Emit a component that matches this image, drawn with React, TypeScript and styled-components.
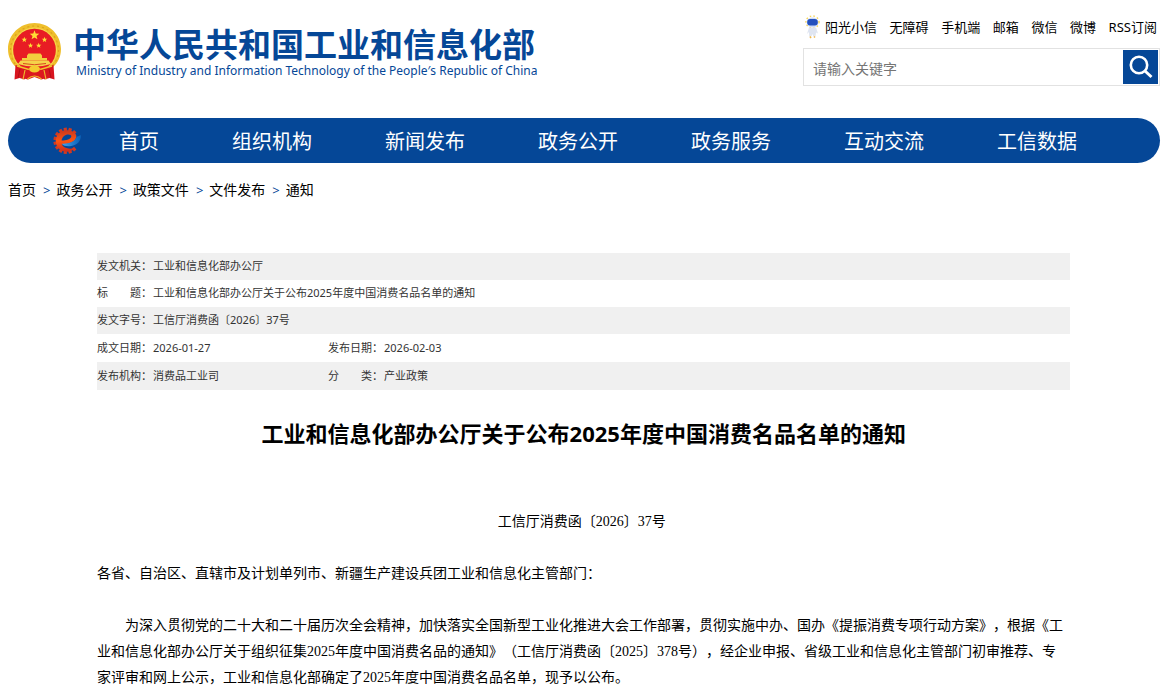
import React from "react";
import styled, { createGlobalStyle } from "styled-components";

const BLUE = "#054797";
const SANS = `"Noto Sans", "Noto Sans CJK SC", sans-serif`;

const GlobalStyle = createGlobalStyle`
  * { box-sizing: border-box; }
  body {
    margin: 0;
    background: #fff;
    color: #000;
    font-family: ${SANS};
    text-spacing-trim: space-all;
  }
  a { color: inherit; text-decoration: none; }
`;

const Page = styled.div`
  padding: 0 9px 0 8px;
`;

const Header = styled.header`
  display: flex;
  justify-content: space-between;
  align-items: flex-start;
  height: 118px;
  padding-top: 16px;
`;

const Brand = styled.a`
  display: flex;
  align-items: flex-start;
  gap: 12px;
  padding-top: 7px;
  color: ${BLUE};
`;

const BrandText = styled.span`
  display: flex;
  flex-direction: column;
  white-space: nowrap;
`;

const BrandName = styled.span`
  font: 700 33px/40px "Noto Sans CJK SC", sans-serif;
`;

const BrandEnglish = styled.span`
  padding-left: 3px;
  font: 400 12px/16px ${SANS};
`;

const Tools = styled.div`
  width: 357px;
`;

const QuickLinks = styled.nav`
  display: flex;
  justify-content: space-between;
  align-items: center;
  height: 22px;
  padding: 0 3px 0 2px;
  font-size: 13px;
  line-height: 20px;
  white-space: nowrap;
`;

const QuickLink = styled.a`
  display: flex;
  align-items: center;
  gap: 5px;
`;

const Search = styled.form`
  display: flex;
  height: 38px;
  margin-top: 10px;
  padding: 1px;
  border: 1px solid #e2e2e2;
`;

const SearchInput = styled.input`
  flex: 1;
  min-width: 0;
  padding: 4px 8px 0;
  border: 0;
  outline: 0;
  font: 14px/20px ${SANS};
  &::placeholder { color: #757575; opacity: 1; }
`;

const SearchButton = styled.button`
  display: flex;
  align-items: center;
  justify-content: center;
  width: 35px;
  padding: 0;
  border: 0;
  background: ${BLUE};
`;

const MainNav = styled.nav`
  display: flex;
  align-items: center;
  height: 45px;
  padding-left: 44px;
  border-radius: 23px;
  background: ${BLUE};
  color: #fff;
  font-size: 20px;
  line-height: 45px;
  white-space: nowrap;
`;

const NavHome = styled.a`
  margin: 0 73px 0 37px;
  padding-top: 2px;
`;

const NavList = styled.div`
  display: flex;
  gap: 73px;
  padding-top: 2px;
`;

const Breadcrumb = styled.nav`
  display: flex;
  gap: 6px;
  padding-top: 16px;
  font-size: 14px;
  line-height: 22px;
`;

const Crumb = styled.a`
  padding-right: 1px;
`;

const Arrow = styled.span`
  color: ${BLUE};
  font-size: 13px;
`;

const Article = styled.main`
  width: 84.5%;
  margin: 52px auto 0 89px;
`;

const MetaTable = styled.table`
  width: 100%;
  table-layout: fixed;
  border-collapse: collapse;
  color: #333;
  font-size: 11px;
  line-height: 16px;
`;

const MetaRow = styled.tr<{ $tall?: boolean }>`
  height: ${(p) => (p.$tall ? 28 : 27)}px;
  &:nth-child(odd) { background: #f0f0f0; }
  > * { padding: 0 0 ${(p) => (p.$tall ? 0 : 2)}px; }
`;

const MetaLabel = styled.th`
  font-weight: 400;
  text-align: left;
  white-space: nowrap;
`;

const MetaValue = styled.td``;

const Title = styled.h1`
  margin: 26px 0 0;
  font-size: 22px;
  line-height: 34px;
  text-align: center;
`;

const Body = styled.section`
  padding: 59px 4px 8px 0;
  font: 14px/26px "Liberation Serif", "Noto Sans CJK SC", serif;
`;

const Paragraph = styled.p<{ $center?: boolean; $indent?: boolean }>`
  margin: 0 0 26px;
  text-align: ${(p) => (p.$center ? "center" : "left")};
  text-indent: ${(p) => (p.$indent ? "2em" : "0")};
`;

function star(cx: number, cy: number, r: number) {
  return Array.from({ length: 10 }, (_, i) => {
    const a = (Math.PI / 5) * i - Math.PI / 2;
    const d = i % 2 ? r * 0.42 : r;
    return `${cx + d * Math.cos(a)},${cy + d * Math.sin(a)}`;
  }).join(" ");
}

function Emblem() {
  return (
    <svg width="53" height="58" viewBox="0 0 53 58" aria-hidden="true">
      <path d="M26.500 0C12 0 0 11.500 0 26c0 8 3.500 14 8 18l1 6h35l1-6c4.500-4 8-10 8-18C53 11.500 41 0 26.500 0z" fill="#efbf2c" />
      <circle cx="26.500" cy="27" r="24" fill="none" stroke="#dca41d" strokeWidth="1.200" strokeDasharray="2 3" />
      <circle cx="26.500" cy="27" r="22" fill="none" stroke="#f8da50" strokeWidth="1" />
      <circle cx="26.500" cy="27" r="21.300" fill="#e81c24" />
      <g fill="#ffdf35">
        <polygon points={star(26.500, 12.300, 5)} />
        <polygon points={star(16.300, 16.700, 2.900)} />
        <polygon points={star(36.500, 16.700, 2.900)} />
        <polygon points={star(22.500, 22.600, 2.800)} />
        <polygon points={star(30.700, 22.600, 2.800)} />
      </g>
      <path d="M20.500 30.500h12l1.500 2v2.500h5v2.500H14V35h5v-2.500z" fill="#f2cf3e" />
      <path d="M12.500 37.500h28l2.500 3.500q-16.500 5-33 0z" fill="#f5d24a" />
      <path d="M15 40.500q11.500 2.500 23 0" fill="none" stroke="#d94a20" strokeWidth="1" />
      <path d="M7.500 42l14 4-5 10.500-5-1.500-5 1.500zM45.500 42l-14 4 5 10.500 5-1.500 5 1.500z" fill="#d8151f" />
      <path d="M9 43l12 3.500M44 43l-12 3.500" stroke="#f0c62e" strokeWidth="1.500" />
      <path d="M18 48q8.500-5 17 0l4 7-6 1.500-6.500-2.500-6.500 2.500-6-1.500z" fill="#dc1820" />
      <ellipse cx="26.500" cy="46" rx="5.500" ry="3.500" fill="#f5cb30" />
      <path d="M17 47l-2 9.500M36 47l2 9.500M19.500 56q7-6 14 0" fill="none" stroke="#edb82c" strokeWidth="1.200" />
      <path d="M12 46l-2 9M41 46l2 9" stroke="#b50e18" strokeWidth="1" />
    </svg>
  );
}

function Mascot() {
  return (
    <svg width="15" height="24" viewBox="0 0 15 24" aria-hidden="true">
      <ellipse cx="7.500" cy="7" rx="6.500" ry="6" fill="none" stroke="#f7d65c" strokeWidth="1.500" strokeDasharray="1.500 2.200" />
      <ellipse cx="7.500" cy="7.500" rx="5.800" ry="5" fill="#cfdcf8" />
      <rect x="2.200" y="4" width="10.600" height="6.500" rx="3" fill="#2450bd" />
      <path d="M4 12.500h7l2 6-2-1-.5 4H8.300L7.500 19l-1.200 2.500H4.200L4 17l-2 2z" fill="#dfe5f1" />
      <path d="M5 21.500l1 1.500M9 21.500l1 1" stroke="#f1b84a" strokeWidth="1.500" />
    </svg>
  );
}

function GearMark() {
  const teeth = [48, 72, 96, 120, 144, 168, 192, 216, 240, 264, 288, 312];
  return (
    <svg width="30" height="30" viewBox="0 0 30 30" aria-hidden="true">
      <defs>
        <linearGradient id="gear" x1="0" y1="0" x2="0" y2="1">
          <stop offset="0" stopColor="#c9381f" />
          <stop offset=".5" stopColor="#ff5510" />
          <stop offset="1" stopColor="#c92d20" />
        </linearGradient>
        <linearGradient id="swoosh" x1="0" y1="0" x2="1" y2="0">
          <stop offset="0" stopColor="#45a4ee" />
          <stop offset="1" stopColor="#0a5fb4" />
        </linearGradient>
      </defs>
      {teeth.map((a) => (
        <rect key={a} x="24" y="13.200" width="3.600" height="3.200" fill="#d23a20" transform={`rotate(${a} 14.500 14.800)`} />
      ))}
      <path d="M14.500 4.300C8.500 4.300 3.800 9 3.800 15s4.700 10.700 10.700 10.700c3.800 0 6.500-1.500 8.500-4-5 2-11.500.8-13.300-3.400 7 .2 13.800-2.800 14.600-7.300C25 7 19.500 4.300 14.500 4.300zM9.600 14.600C10 10.800 13 8.400 16.300 8.400c2 0 3.300.8 3 2.300-.5 2.300-5 3.900-9.700 3.900z" fill="url(#gear)" fillRule="evenodd" />
      <path d="M9.800 17.800c7 .3 13.500-1.800 15-7.200 1.500-.2 3-.7 4-1.600.8 6-4 10-9.500 11-4 .7-7.500.2-9.500-2.200z" fill="url(#swoosh)" />
    </svg>
  );
}

const quickLinks = ["无障碍", "手机端", "邮箱", "微信", "微博", "RSS订阅"];
const navItems = ["组织机构", "新闻发布", "政务公开", "政务服务", "互动交流", "工信数据"];
const crumbs = ["首页", "政务公开", "政策文件", "文件发布", "通知"];

export default function App() {
  return (
    <>
      <GlobalStyle />
      <Page>
        <Header>
          <Brand href="#">
            <Emblem />
            <BrandText>
              <BrandName>中华人民共和国工业和信息化部</BrandName>
              <BrandEnglish>Ministry of Industry and Information Technology of the People′s Republic of China</BrandEnglish>
            </BrandText>
          </Brand>
          <Tools>
            <QuickLinks>
              <QuickLink href="#"><Mascot />阳光小信</QuickLink>
              {quickLinks.map((t) => <QuickLink href="#" key={t}>{t}</QuickLink>)}
            </QuickLinks>
            <Search onSubmit={(e) => e.preventDefault()}>
              <SearchInput type="text" placeholder="请输入关键字" aria-label="请输入关键字" />
              <SearchButton type="submit" aria-label="搜索">
                <svg width="25" height="25" viewBox="0 0 25 25" fill="none" stroke="#fff" aria-hidden="true">
                  <circle cx="11" cy="10" r="8.200" strokeWidth="2.600" />
                  <path d="M17 16l6.500 6" strokeWidth="3" />
                </svg>
              </SearchButton>
            </Search>
          </Tools>
        </Header>
        <MainNav>
          <GearMark />
          <NavHome href="#">首页</NavHome>
          <NavList>
            {navItems.map((t) => <a href="#" key={t}>{t}</a>)}
          </NavList>
        </MainNav>
        <Breadcrumb>
          {crumbs.map((t, i) => (
            <React.Fragment key={t}>
              {i > 0 && <Arrow>&gt;</Arrow>}
              <Crumb href="#">{t}</Crumb>
            </React.Fragment>
          ))}
        </Breadcrumb>
        <Article>
          <MetaTable>
            <colgroup>
              <col width="56" />
              <col width="175" />
              <col width="56" />
              <col />
            </colgroup>
            <tbody>
              <MetaRow>
                <MetaLabel scope="row">发文机关：</MetaLabel>
                <MetaValue colSpan={3}>工业和信息化部办公厅</MetaValue>
              </MetaRow>
              <MetaRow>
                <MetaLabel scope="row">标　　题：</MetaLabel>
                <MetaValue colSpan={3}>工业和信息化部办公厅关于公布2025年度中国消费名品名单的通知</MetaValue>
              </MetaRow>
              <MetaRow>
                <MetaLabel scope="row">发文字号：</MetaLabel>
                <MetaValue colSpan={3}>工信厅消费函〔2026〕37号</MetaValue>
              </MetaRow>
              <MetaRow $tall>
                <MetaLabel scope="row">成文日期：</MetaLabel>
                <MetaValue>2026-01-27</MetaValue>
                <MetaLabel scope="row">发布日期：</MetaLabel>
                <MetaValue>2026-02-03</MetaValue>
              </MetaRow>
              <MetaRow $tall>
                <MetaLabel scope="row">发布机构：</MetaLabel>
                <MetaValue>消费品工业司</MetaValue>
                <MetaLabel scope="row">分　　类：</MetaLabel>
                <MetaValue>产业政策</MetaValue>
              </MetaRow>
            </tbody>
          </MetaTable>
          <Title>工业和信息化部办公厅关于公布2025年度中国消费名品名单的通知</Title>
          <Body>
            <Paragraph $center>工信厅消费函〔2026〕37号</Paragraph>
            <Paragraph>各省、自治区、直辖市及计划单列市、新疆生产建设兵团工业和信息化主管部门：</Paragraph>
            <Paragraph $indent>
              为深入贯彻党的二十大和二十届历次全会精神，加快落实全国新型工业化推进大会工作部署，贯彻实施中办、国办《提振消费专项行动方案》，根据《工业和信息化部办公厅关于组织征集2025年度中国消费名品的通知》（工信厅消费函〔2025〕378号），经企业申报、省级工业和信息化主管部门初审推荐、专家评审和网上公示，工业和信息化部确定了2025年度中国消费名品名单，现予以公布。
            </Paragraph>
          </Body>
        </Article>
      </Page>
    </>
  );
}
